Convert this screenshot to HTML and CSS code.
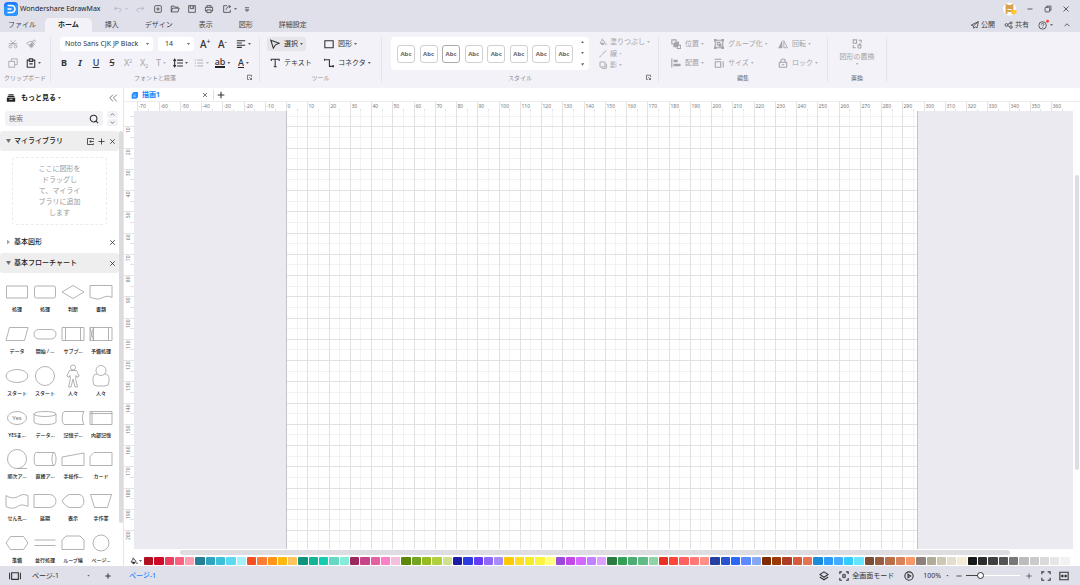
FILE: index.html
```html
<!DOCTYPE html>
<html lang="ja">
<head>
<meta charset="utf-8">
<title>Wondershare EdrawMax</title>
<link rel="stylesheet" href="styles.css">
</head>
<body>
<svg class="defs" aria-hidden="true">
  <symbol id="undo" viewBox="0 0 12 12"><path d="M4 3 1.500 5.200 4 7.500M2 5.200h5c4 0 3 4.300 0 4.300"/></symbol>
  <symbol id="redo" viewBox="0 0 12 12"><path d="M8 3l2.500 2.200L8 7.500M10 5.200H5c-4 0-3 4.300 0 4.300"/></symbol>
  <symbol id="new" viewBox="0 0 12 12"><rect x="2" y="2" width="8" height="8" rx="1"/><path d="M6 4v4M4 6h4"/></symbol>
  <symbol id="open" viewBox="0 0 12 12"><path d="M1.500 9.500v-7H5l1 1.300h3.500V5M1.500 9.500 3 5h8L9.600 9.500z"/></symbol>
  <symbol id="save" viewBox="0 0 12 12"><path d="M2 2h8v8H2zM4 2v3.500h4V2M6.700 3v1.200"/></symbol>
  <symbol id="print" viewBox="0 0 12 12"><path d="M3.500 4V2h5v2M3.500 8.500H1.700V4h8.600v4.500H8.500M3.500 7h5v3.300h-5z"/></symbol>
  <symbol id="export" viewBox="0 0 12 12"><path d="M6 2H2v8h8V7M5 7c0-2.500 1.500-4 5-4M8 1.500 10.300 3 8.500 5"/></symbol>
  <symbol id="more" viewBox="0 0 12 12"><path d="M3.500 4.500h5M4 7h4L6 9z"/></symbol>
  <symbol id="min" viewBox="0 0 12 12"><path d="M3 6h6"/></symbol>
  <symbol id="restore" viewBox="0 0 12 12"><rect x="2.500" y="4" width="5.500" height="5.500" rx="1"/><path d="M4.500 4V2.500h5v5H8"/></symbol>
  <symbol id="x" viewBox="0 0 12 12"><path d="M3 3l6 6M9 3 3 9"/></symbol>
  <symbol id="plus" viewBox="0 0 12 12"><path d="M6 2v8M2 6h8"/></symbol>
  <symbol id="up" viewBox="0 0 12 12"><path d="M3 7.500 6 4.500l3 3"/></symbol>
  <symbol id="down" viewBox="0 0 12 12"><path d="M3 4.500l3 3 3-3"/></symbol>
  <symbol id="send" viewBox="0 0 12 12"><path d="M10 2 1.500 6 4 7.200 4.500 10l1.700-1.800L8.500 9.500zM10 2 4 7.200"/></symbol>
  <symbol id="share" viewBox="0 0 12 12"><circle cx="3" cy="6" r="1.700"/><circle cx="8.500" cy="3.500" r="1.300"/><circle cx="8.500" cy="8.500" r="1.500"/><path d="M4.500 5.200 7.300 4M4.500 6.800l2.600 1.200"/></symbol>
  <symbol id="cut" viewBox="0 0 12 12"><circle cx="2.800" cy="9" r="1.700"/><circle cx="9.200" cy="9" r="1.700"/><path d="M3 1.500l5 6M9 1.500l-5 6M1 5.500h10"/></symbol>
  <symbol id="brush" viewBox="0 0 12 12"><path d="M1 5l5-2.500 4 4L6.500 11zM6.500 3 8.500 5M8.500 5.500 11.500 2.500 10 1 7 3.500"/><path class="f" d="M3.500 7.500l3-3 2.500 2L6.500 10z"/></symbol>
  <symbol id="copy" viewBox="0 0 12 12"><rect x="1" y="4" width="7" height="7"/><path d="M4 4V1h7v7H8"/></symbol>
  <symbol id="paste" viewBox="0 0 12 12"><path class="b" d="M4 2.500H1.500v8.500h9V2.500H8M4 1h4v3H4zM4 7h4"/></symbol>
  <symbol id="align" viewBox="0 0 12 12"><path class="b" d="M1 2h10M1 4.700h6M1 7.400h10M1 10h6"/></symbol>
  <symbol id="spacing" viewBox="0 0 12 12"><path class="b" d="M2 2v8M.5 3.500 2 1.500l1.500 2M.5 8.500 2 10.500l1.500-2M5 2.500h7M5 6h7M5 9.500h7"/></symbol>
  <symbol id="list" viewBox="0 0 12 12"><path d="M1 2.500h1.500M1 6h1.500M1 9.500h1.500M4 2.500h7M4 6h7M4 9.500h7"/></symbol>
  <symbol id="launch" viewBox="0 0 12 12"><path class="b" d="M9.500 5V2h-7v7.500H5M5.500 5.500l4 4M9.500 6.500v3h-3"/></symbol>
  <symbol id="select" viewBox="0 0 12 12"><path class="b" d="M1 1.500l10 3.700L6.500 7 4 11z"/></symbol>
  <symbol id="rect" viewBox="0 0 12 12"><path class="b" d="M1 2h10v8.500H1z"/></symbol>
  <symbol id="text" viewBox="0 0 12 12"><path class="b" d="M1.500 3.700V1.500h9.500v2.200M6.200 1.500v9M4.500 10.500h3.500"/></symbol>
  <symbol id="conn" viewBox="0 0 12 12"><path class="b" d="M1 2h5.500v8H11"/><path class="f" d="M-1 1h2.200v2.200H-1zM10 8.800h2.500V11.200H10z"/></symbol>
  <symbol id="fill" viewBox="0 0 12 12"><path class="b" d="M4.500 1v2.500M1.500 7l4-4.500L9 6.500 5.500 10.500z"/><path class="f" d="M1.500 7h7.500l-3.500 3.500zM10.500 7.500l1.300 2.500H9z"/></symbol>
  <symbol id="line" viewBox="0 0 12 12"><path class="b" d="M1 11 3 8M4 7l7-6"/></symbol>
  <symbol id="shadow" viewBox="0 0 12 12"><path class="b" d="M1.500 1.500h7.500v7.500H1.500z"/><path class="b" d="M4 11h7V4"/></symbol>
  <symbol id="pos" viewBox="0 0 12 12"><path class="b" d="M1 1h5v5H1zM7 3.500h2v3M3.500 7v2.300h3M7.500 7.500H11.500V11.500H7.500z"/><path class="f" d="M3.500 4h5.500v5.500H3.500z"/></symbol>
  <symbol id="group" viewBox="0 0 12 12"><path class="b" d="M1.500 1.500h9v9h-9z"/><path class="f" d="M0 0h3v3H0zM9 0h3v3H9zM0 9h3v3H0zM9 9h3v3H9z"/><path class="b" d="M4 4h3v3H4zM5.500 8.500h3v-3"/></symbol>
  <symbol id="flip" viewBox="0 0 12 12"><path class="f" d="M5.200 1v10H.3z"/><path d="M7 2v8.500h4.300z"/></symbol>
  <symbol id="arrange" viewBox="0 0 12 12"><path class="b" d="M1 .5v11"/><path class="f" d="M3 2h5v3H3zM3 7h8.500v3H3z"/></symbol>
  <symbol id="size" viewBox="0 0 12 12"><path class="b" d="M1.500 4.500h6.500v6.500H1.500zM.5 1.500h8.500M11 4v7.500"/></symbol>
  <symbol id="lock" viewBox="0 0 12 12"><rect class="b" x="1.500" y="5" width="9" height="6" rx=".5"/><path class="b" d="M3.500 5V3.500c0-3 5-3 5 0V5M4.500 8h3"/></symbol>
  <symbol id="swap" viewBox="0 0 12 12"><path class="b" d="M1.500 1h4v4h-4zM8 1.500h3V4.500M1.500 7.500V10.500h3"/><path class="b" d="M8 6.500h3M9.500 5v2"/><circle class="b" cx="9" cy="9" r="2"/></symbol>
  <symbol id="library" viewBox="0 0 12 12"><path class="b" d="M3 2h6M2 4h8"/><path class="f" d="M1 5.500h10v5H1z"/><path class="w" d="M4 7.500h4"/></symbol>
  <symbol id="collapse" viewBox="0 0 12 12"><path d="M6 2 2 6l4 4M10.500 2l-4 4 4 4"/></symbol>
  <symbol id="search" viewBox="0 0 12 12"><circle class="b" cx="5.500" cy="5.500" r="4"/><path class="b" d="M8.500 8.500 11 11"/></symbol>
  <symbol id="import" viewBox="0 0 12 12"><path d="M7 2H2v8h8V8.500M10 3.500V2H7M10.500 6H5M7 4.300 5 6l2 1.700"/></symbol>
  <symbol id="pageicon" viewBox="0 0 16 12"><path class="b" d="M4 2h8v8H4zM1.500 2v8M14.500 2v8"/></symbol>
  <symbol id="layers" viewBox="0 0 12 12"><path class="b" d="M6 1l5 3.200L6 7.500 1 4.200zM1 7.200l5 3.300 5-3.300"/></symbol>
  <symbol id="focus" viewBox="0 0 12 12"><path class="b" d="M1 3.500V1h2.500M8.500 1H11v2.500M11 8.500V11H8.500M3.500 11H1V8.500"/><path d="M4.500 4h3v4h-3zM4.500 6h3"/></symbol>
  <symbol id="play" viewBox="0 0 12 12"><circle class="b" cx="6" cy="6" r="5"/><path class="b" d="M4.800 4v4L8 6z"/></symbol>
  <symbol id="full" viewBox="0 0 12 12"><path class="b" d="M1 4V1h3M8 1h3v3M11 8v3H8M4 11H1V8"/></symbol>
  <symbol id="fit" viewBox="0 0 12 12"><path class="b" d="M1 1.500h10v9H1zM3 6h6M4.500 4.500 3 6l1.500 1.500M7.500 4.500 9 6 7.500 7.500"/></symbol>
</svg>

<header class="top">
  <div class="titlebar">
    <svg class="logo" viewBox="0 0 14 14"><rect width="14" height="14" rx="3.500" fill="#1e7dff"/><path d="M0 5 14 2v8a4 4 0 0 1-4 4H4a4 4 0 0 1-4-4z" fill="#2c95ff"/><path d="M3.500 3.500h4a3.500 3.500 0 0 1 0 7h-4M3.500 7h4" fill="none" stroke="#fff" stroke-width="1.600"/></svg>
    <span class="appname">Wondershare EdrawMax</span>
    <nav class="quick" aria-label="クイックアクセス">
      <button class="off" aria-label="元に戻す"><svg><use href="#undo"/></svg><i></i></button>
      <button class="off" aria-label="やり直し"><svg><use href="#redo"/></svg></button>
      <button aria-label="新規"><svg><use href="#new"/></svg></button>
      <button aria-label="開く"><svg><use href="#open"/></svg></button>
      <button aria-label="保存"><svg><use href="#save"/></svg></button>
      <button aria-label="印刷"><svg><use href="#print"/></svg></button>
      <button aria-label="エクスポート"><svg><use href="#export"/></svg><i></i></button>
      <button aria-label="その他"><svg><use href="#more"/></svg></button>
    </nav>
    <div class="window">
      <button aria-label="アカウント"><svg class="avatar" viewBox="0 0 14 14"><circle cx="6.500" cy="7" r="6.500" fill="#fff"/><path d="M3.500 12V3l2 1h2l2-1v9M4 6h5M4 9h5" fill="none" stroke="#dba04c" stroke-width="1.800"/><path d="M9 8h4l1 2-3 3-3-3z" fill="#ffc62e"/></svg></button>
      <button aria-label="最小化"><svg><use href="#min"/></svg></button>
      <button aria-label="元のサイズ"><svg><use href="#restore"/></svg></button>
      <button aria-label="閉じる"><svg><use href="#x"/></svg></button>
    </div>
  </div>
  <div class="tabs">
    <button>ファイル</button><button class="active">ホーム</button><button>挿入</button><button>デザイン</button><button>表示</button><button>図形</button><button>詳細設定</button>
    <div class="actions">
      <button><svg><use href="#send"/></svg>公開</button>
      <button><svg><use href="#share"/></svg>共有</button>
      <button aria-label="ヘルプ"><svg viewBox="0 0 12 12"><circle cx="5.500" cy="6.500" r="4.500"/><path d="M4 5.500c0-2 3-2 3 0 0 1-1.500 1-1.500 2M5.500 8.500v.8"/><circle cx="11.500" cy="1.500" r="1.700" fill="#ff3b3b" stroke="none"/></svg><i></i></button>
      <button aria-label="リボンを閉じる"><svg><use href="#up"/></svg></button>
    </div>
  </div>
</header>

<section class="ribbon">
  <div class="group clip">
    <div class="row"><button class="off" aria-label="切り取り"><svg><use href="#cut"/></svg></button><button class="off" aria-label="書式コピー"><svg><use href="#brush"/></svg></button></div>
    <div class="row"><button class="off" aria-label="コピー"><svg><use href="#copy"/></svg></button><button aria-label="貼り付け"><svg><use href="#paste"/></svg><i></i></button></div>
    <div class="caption">クリップボード</div>
  </div>
  <div class="sep"></div>
  <div class="group font">
    <div class="row">
      <label class="pick family"><select aria-label="フォント"><option>Noto Sans CJK JP Black</option></select><i></i></label>
      <label class="pick size"><select aria-label="文字サイズ"><option>14</option></select><i></i></label>
      <button class="glyph">A<sup>+</sup></button><button class="glyph">A<sup>-</sup></button>
      <button aria-label="配置"><svg><use href="#align"/></svg><i></i></button>
    </div>
    <div class="row letters">
      <button><b>B</b></button><button><b><em>I</em></b></button><button><u>U</u></button><button><s>S</s></button>
      <button class="off">X<sup>2</sup></button><button class="off">X<sub>2</sub></button><button class="off">T<i></i></button>
      <button aria-label="行間"><svg><use href="#spacing"/></svg><i></i></button>
      <button class="off" aria-label="箇条書き"><svg><use href="#list"/></svg><i></i></button>
      <button><span class="bar">ab</span><i></i></button><button><span class="bar thin">A</span><i></i></button>
    </div>
    <div class="caption">フォントと段落<button class="launch" aria-label="詳細"><svg><use href="#launch"/></svg></button></div>
  </div>
  <div class="sep"></div>
  <div class="group tools">
    <div class="row"><button class="sel"><svg><use href="#select"/></svg>選択<i></i></button><button><svg><use href="#rect"/></svg>図形<i></i></button></div>
    <div class="row"><button><svg><use href="#text"/></svg>テキスト</button><button><svg><use href="#conn"/></svg>コネクタ<i></i></button></div>
    <div class="caption">ツール</div>
  </div>
  <div class="sep"></div>
  <div class="group style">
    <div class="stylebody">
      <div class="gallery">
        <div class="cards"><button>Abc</button><button>Abc</button><button>Abc</button><button>Abc</button><button>Abc</button><button>Abc</button><button>Abc</button><button>Abc</button></div>
        <div class="scroll"><button aria-label="上へ"><i class="flip"></i></button><button aria-label="下へ"><i></i></button><button aria-label="すべて"><i class="all"></i></button></div>
      </div>
      <div class="paint off">
        <button><svg><use href="#fill"/></svg>塗りつぶし<i></i></button>
        <button><svg><use href="#line"/></svg>線<i></i></button>
        <button><svg><use href="#shadow"/></svg>影<i></i></button>
      </div>
    </div>
    <div class="caption">スタイル<button class="launch" aria-label="詳細"><svg><use href="#launch"/></svg></button></div>
  </div>
  <div class="sep"></div>
  <div class="group edit">
    <div class="row off"><button><svg><use href="#pos"/></svg>位置<i></i></button><button><svg><use href="#group"/></svg>グループ化<i></i></button><button><svg><use href="#flip"/></svg>回転<i></i></button></div>
    <div class="row off"><button><svg><use href="#arrange"/></svg>配置<i></i></button><button><svg><use href="#size"/></svg>サイズ<i></i></button><button><svg><use href="#lock"/></svg>ロック<i></i></button></div>
    <div class="caption dark">編集</div>
  </div>
  <div class="sep"></div>
  <div class="group replace">
    <button class="off tall"><svg><use href="#swap"/></svg><span>図形の置換</span><i></i></button>
    <div class="caption dark">置換</div>
  </div>
  <div class="sep"></div>
</section>

<main class="work">
  <aside class="side">
    <div class="sidehead"><svg><use href="#library"/></svg><button>もっと見る<i></i></button><button class="end" aria-label="折りたたむ"><svg><use href="#collapse"/></svg></button></div>
    <div class="find">
      <label class="box"><input type="text" placeholder="検索" aria-label="検索"><svg><use href="#search"/></svg></label>
      <div class="spin"><button aria-label="前へ"><svg><use href="#up"/></svg></button><button aria-label="次へ"><svg><use href="#down"/></svg></button></div>
    </div>
    <div class="panels">
      <div class="list">
        <h2 class="open"><i></i><span>マイライブラリ</span><button aria-label="読み込む"><svg><use href="#import"/></svg></button><button aria-label="追加"><svg><use href="#plus"/></svg></button><button aria-label="閉じる"><svg><use href="#x"/></svg></button></h2>
        <p class="drop">ここに図形をドラッグして、マイライブラリに追加します</p>
        <h2><i class="right"></i><span>基本図形</span><button aria-label="閉じる"><svg><use href="#x"/></svg></button></h2>
        <h2 class="open second"><i></i><span>基本フローチャート</span><button aria-label="閉じる"><svg><use href="#x"/></svg></button></h2>
        <div class="shapes">
          <figure><svg viewBox="0 0 24 20"><path d="M1.500 4h21v12h-21z"/></svg><figcaption>処理</figcaption></figure>
          <figure><svg viewBox="0 0 24 20"><rect x="1.500" y="4" width="21" height="12" rx="2"/></svg><figcaption>処理</figcaption></figure>
          <figure><svg viewBox="0 0 24 20"><path d="M12 3.500 23 10l-11 6.500L1 10z"/></svg><figcaption>判断</figcaption></figure>
          <figure><svg viewBox="0 0 24 20"><path d="M1 3.500h22v12C17 12 13 17 9 17c-3 0-5-1-8-1.500z"/></svg><figcaption>書類</figcaption></figure>
          <figure><svg viewBox="0 0 24 20"><path d="M4.500 3.500H23L19.500 16.500H1z"/></svg><figcaption>データ</figcaption></figure>
          <figure><svg viewBox="0 0 24 20"><rect x="1" y="5.500" width="22" height="9.500" rx="4.700"/></svg><figcaption>開始 / ...</figcaption></figure>
          <figure><svg viewBox="0 0 24 20"><path d="M1 3.500h22v13H1zM4.500 3.500v13M19.500 3.500v13"/></svg><figcaption>サブプ...</figcaption></figure>
          <figure><svg viewBox="0 0 24 20"><path d="M1 3.500h22v13H1zM4.500 3.500v13M19.500 3.500v13M1 3.500l3.500 13M4.500 3.500 1 16.500"/></svg><figcaption>予備処理</figcaption></figure>
          <figure><svg viewBox="0 0 24 20"><ellipse cx="12" cy="10" rx="11" ry="6.500"/></svg><figcaption>スタート</figcaption></figure>
          <figure><svg viewBox="0 0 24 20"><circle cx="12" cy="10" r="9.500"/></svg><figcaption>スタート</figcaption></figure>
          <figure><svg viewBox="0 0 24 20"><circle cx="12" cy="1.500" r="2.500"/><path d="M8.500 4.500h7l2.700 5.500-2.200 1.500-1-2-.5 3 2 8.500h-2.500L12 13l-2 8H7.500l2-8.500L9 9.500l-1 2L5.800 10z"/></svg><figcaption>人々</figcaption></figure>
          <figure><svg viewBox="0 0 24 20"><circle cx="12" cy="4.500" r="5"/><path d="M8.500 8C5.500 8 4 9.500 4 12.500V16q0 4 4 4h8q4 0 4-4v-3.500C20 9.500 18.500 8 15.500 8"/></svg><figcaption>人々</figcaption></figure>
          <figure><svg viewBox="0 0 24 20"><ellipse cx="12" cy="10" rx="9.500" ry="6.500"/><text x="12" y="12">Yes</text></svg><figcaption>YESま...</figcaption></figure>
          <figure><svg viewBox="0 0 24 20"><ellipse cx="12" cy="6" rx="11" ry="2.500"/><path d="M1 6v8c0 3.500 22 3.500 22 0V6"/></svg><figcaption>データ...</figcaption></figure>
          <figure><svg viewBox="0 0 24 20"><path d="M3 3.500h20c-2 3-2 10 0 13H3c-2.500-2-2.500-11 0-13z"/></svg><figcaption>記憶デ...</figcaption></figure>
          <figure><svg viewBox="0 0 24 20"><path d="M1 3.500h22v13H1zM1 5.500h22M3 3.500v13"/></svg><figcaption>内部記憶</figcaption></figure>
          <figure><svg viewBox="0 0 24 20"><circle cx="12" cy="10" r="9.500"/><path d="M12 19.500h10"/></svg><figcaption>順次ア...</figcaption></figure>
          <figure><svg viewBox="0 0 24 20"><ellipse cx="21" cy="10" rx="2" ry="6.500"/><path d="M21 3.500H3c-2.500 1-2.500 12 0 13h18"/></svg><figcaption>直接ア...</figcaption></figure>
          <figure><svg viewBox="0 0 24 20"><path d="M1 8l22-4v12.500H1z"/></svg><figcaption>手操作...</figcaption></figure>
          <figure><svg viewBox="0 0 24 20"><path d="M5 3.500h18v13H1V7.500z"/></svg><figcaption>カード</figcaption></figure>
          <figure><svg viewBox="0 0 24 20"><path d="M1 4.500c6 4 11 2 14 0 3-1.500 5-1 8 0v11c-7-3-9-1-12 1-3 1-7 1-10-1z"/></svg><figcaption>せん孔...</figcaption></figure>
          <figure><svg viewBox="0 0 24 20"><path d="M1 3.500h15.500a6.500 6.500 0 0 1 0 13H1z"/></svg><figcaption>延期</figcaption></figure>
          <figure><svg viewBox="0 0 24 20"><path d="M8 3.500h10c6.500 0 6.500 13 0 13H8Q3 14 1 10 3 6 8 3.500z"/></svg><figcaption>表示</figcaption></figure>
          <figure><svg viewBox="0 0 24 20"><path d="M1.500 3.500h21l-4 13h-13z"/></svg><figcaption>手作業</figcaption></figure>
          <figure><svg viewBox="0 0 24 20"><path d="M5.500 3.500h13L23 10l-4.500 6.500h-13L1 10z"/></svg><figcaption>準備</figcaption></figure>
          <figure><svg viewBox="0 0 24 20"><path d="M1.500 7h21M1.500 12.500h21"/></svg><figcaption>並行処理</figcaption></figure>
          <figure><svg viewBox="0 0 24 20"><path d="M5 3h14l4 4v9.500H1V7z"/></svg><figcaption>ループ端</figcaption></figure>
          <figure><svg viewBox="0 0 24 20"><circle cx="12" cy="10" r="8"/></svg><figcaption>ページ...</figcaption></figure>
        </div>
      </div>
      <div class="track"><div class="thumb"></div></div>
    </div>
  </aside>

  <section class="doc">
    <div class="doctabs">
      <button class="doctab"><svg viewBox="0 0 12 12"><path d="M1 4.500 4 1.500h6.500V9L8 11.500H1z" fill="#2c8cff" stroke="none"/><path d="M3 6h4.500M3 8.500h4.500" stroke="#b8d8ff"/></svg>描画1</button>
      <button aria-label="タブを閉じる"><svg><use href="#x"/></svg></button>
      <button class="add" aria-label="新しいタブ"><svg><use href="#plus"/></svg></button>
    </div>
    <svg class="hruler" id="hruler"></svg>
    <div class="stage">
      <svg class="vruler" id="vruler"></svg>
      <svg class="canvas" id="canvas"></svg>
      <div class="vtrack"><div class="thumb"></div></div>
    </div>
    <div class="htrack"><div class="thumb"></div></div>
    <div class="palette"><button aria-label="塗りつぶし"><svg><use href="#fill"/></svg><i></i></button><div class="swatches" id="swatches"></div></div>
  </section>
</main>

<footer class="status">
  <button class="pg" aria-label="ページ一覧"><svg class="wide"><use href="#pageicon"/></svg></button>
  <label class="pagepick"><select aria-label="ページ"><option>ページ-1</option></select><i></i></label>
  <button class="addpage" aria-label="ページを追加"><svg><use href="#plus"/></svg></button>
  <a class="pagelink" href="#canvas">ページ-1</a>
  <div class="view">
    <button aria-label="レイヤー"><svg><use href="#layers"/></svg></button>
    <button class="mode"><svg><use href="#focus"/></svg>全画面モード</button>
    <button aria-label="再生"><svg><use href="#play"/></svg></button>
    <button class="zoom">100%<i></i></button>
    <button aria-label="縮小"><svg><use href="#min"/></svg></button>
    <input type="range" min="0" max="100" value="24" aria-label="ズーム">
    <button aria-label="拡大"><svg><use href="#plus"/></svg></button>
    <button aria-label="全画面"><svg><use href="#full"/></svg></button>
    <button aria-label="幅に合わせる"><svg><use href="#fit"/></svg></button>
  </div>
</footer>
<script src="script.js"></script>
</body>
</html>
```
FILE: styles.css
```css
* { box-sizing: border-box; }
html, body { height: 100%; }
body {
  margin: 0;
  display: flex;
  flex-direction: column;
  overflow: hidden;
  background: #fff;
  color: #333;
  font: 7px/10px "Noto Sans", "Noto Sans CJK JP", sans-serif;
}
button, input, select { font: inherit; color: inherit; border: 0; padding: 0; margin: 0; background: none; }
button { display: inline-flex; align-items: center; white-space: nowrap; }
svg { flex: none; width: 10px; height: 10px; fill: none; stroke: currentColor; stroke-width: 1; overflow: visible; }
.b { stroke-width: 1.3; }
.f { fill: currentColor; stroke: none; }
.w { stroke: #fff; }
.defs { position: absolute; width: 0; height: 0; }
i { flex: none; width: 3px; height: 2px; margin-left: 2px; background: currentColor; opacity: .75; clip-path: polygon(0 0, 100% 0, 50% 100%); }
.off { color: #a3a3a8; }

.top { background: #e0e0eb; color: #444; }
.titlebar { display: flex; align-items: center; height: 18px; padding: 0 9px 0 4px; }
.logo { width: 14px; height: 14px; stroke: none; }
.appname { width: 93px; margin-left: 2px; color: #222; white-space: nowrap; }
.quick { display: flex; align-items: center; }
.quick button { width: 18px; }
.quick button:first-child { width: 22px; }
.quick .off { color: #b4b4c0; }
.quick button:nth-child(n+3):nth-child(-n+5) { width: 17px; }
.quick button:nth-child(7) { width: 20px; }
.window { display: flex; align-items: center; gap: 8px; margin-left: auto; }
.avatar { width: 14px; height: 14px; stroke: none; }
.tabs { display: flex; height: 14px; }
.tabs > button { padding: 0 13px; }
.tabs > button:first-child { padding: 0 9px 0 8px; }
.tabs .active { background: #f3f2f8; border-radius: 5px 5px 0 0; font-weight: 700; color: #222; }
.actions { display: flex; align-items: center; gap: 9px; margin-left: auto; padding-right: 8px; }
.actions button:nth-child(-n+2) svg { margin-right: 1px; }

.ribbon { display: flex; height: 56px; flex: none; background: #f3f2f8; }
.sep { width: 1px; margin: 5px 0 6px; background: #e4e4ea; }
.group { display: flex; flex-direction: column; padding-top: 3px; }
.row { display: flex; align-items: center; height: 18px; margin-bottom: 1px; }
.caption { position: relative; text-align: center; font-size: 6px; color: #8a8a8f; }
.caption.dark { color: #666; }
.launch { position: absolute; right: 6px; top: 1px; color: #555; }
.launch svg { width: 7px; height: 7px; }
.clip { width: 50px; }
.clip .row { padding-left: 8px; }
.clip .row button { width: 18px; }
.font { width: 208px; }
.font .row { padding-left: 9px; }
.pick { display: flex; align-items: center; height: 14px; padding: 0 4px 0 5px; background: #fff; border-radius: 3px; margin-right: 5px; }
.pick select, .pagepick select { appearance: none; flex: 1; min-width: 0; outline: 0; }
.family { width: 93px; }
.size { width: 36px; padding-left: 7px; margin-right: 6px; }
.glyph { width: 18px; font-size: 10px; font-weight: 500; }
sup, sub { font-size: 5px; line-height: 0; }
sup { align-self: flex-start; margin-top: 3px; }
sub { align-self: flex-end; margin-bottom: 2px; }
.glyph sup { font-size: 7px; }
.letters { font-size: 9px; }
.letters button { width: 16px; justify-content: center; font-weight: 500; }
.letters .off { font-weight: 400; }
.letters button:nth-child(7) { width: 18px; }
.letters button:nth-child(n+8) { width: 21px; }
.font .letters { padding-left: 5px; }
.bar { border-bottom: 2px solid #222; line-height: 8px; }
.thin { border-width: 1px; }
.tools { width: 121px; }
.tools .row { display: grid; grid-template-columns: 54px 1fr; justify-items: start; padding-left: 7px; }
.tools button { height: 14px; padding: 0 3px; border-radius: 3px; }
.tools .sel { background: #e5e5ea; }
.tools button svg { margin-right: 4px; }
.style { width: 276px; }
.stylebody { display: flex; height: 38px; padding: 2px 0 3px 9px; }
.gallery { display: flex; width: 198px; padding: 0 3px 0 6px; background: #fff; border-radius: 4px; }
.cards { display: flex; flex: 1; justify-content: space-between; align-items: center; }
.cards button { width: 18px; height: 18px; justify-content: center; border: 1px solid #d0d0d0; border-radius: 3px; font-size: 6px; font-weight: 700; color: #666; }
.cards button:nth-child(3) { border-color: #aaa; }
.scroll { display: flex; flex-direction: column; justify-content: space-around; width: 13px; padding-left: 8px; }
.scroll i, .pick i { margin: 0; }
.flip { transform: rotate(180deg); }
.scroll .all { height: 3px; clip-path: polygon(0 0, 100% 0, 100% 30%, 0 30%, 50% 100%, 100% 30%); }
.paint { display: flex; flex-direction: column; justify-content: space-between; align-items: flex-start; padding-left: 10px; }
.paint svg { width: 8px; height: 8px; margin-right: 3px; }
.edit { width: 168px; }
.edit .row { display: grid; grid-template-columns: 43px 64px 1fr; justify-items: start; padding-left: 12px; }
.edit svg { margin-right: 4px; }
.replace { width: 58px; }
.tall { flex-direction: column; height: 38px; gap: 1px; padding-top: 4px; }
.tall svg { margin-bottom: 2px; }
.tall i { margin: 0; }

.work { display: flex; flex: 1; min-height: 0; }
.side { display: flex; flex-direction: column; flex: none; width: 124px; border-right: 1px solid #e6e6ea; }
.sidehead { display: flex; align-items: center; height: 20px; padding: 0 5px 0 6px; font-weight: 700; color: #222; }
.sidehead svg { margin-right: 5px; }
.sidehead .end { margin-left: auto; color: #666; }
.sidehead .end svg { margin: 0; }
.find { display: flex; gap: 4px; padding: 3px 5px 5px; height: 23px; }
.box { display: flex; align-items: center; flex: 1; min-width: 0; padding: 0 4px; background: #f1f1f6; border-radius: 3px; }
.box input { flex: 1; min-width: 0; outline: 0; }
.box input::placeholder { color: #777; }
.spin { display: flex; flex-direction: column; flex: none; gap: 1px; width: 11px; }
.spin button { flex: 1; min-height: 0; justify-content: center; background: #f1f1f6; border-radius: 2px; }
.spin svg { width: 7px; height: 7px; }
.panels { display: flex; flex: 1; min-height: 0; }
.list { display: flex; flex-direction: column; width: 119px; min-height: 0; }
h2 { display: flex; align-items: center; flex: none; gap: 2px; height: 20px; margin: 0; padding: 0 2px 0 6px; font-size: 7px; line-height: 10px; font-weight: 500; color: #222; }
h2 span { margin-right: auto; }
h2 i { width: 5px; height: 4px; margin: 0 1px 0 0; color: #444; }
h2 .right { clip-path: polygon(20% 0, 80% 50%, 20% 100%); color: #888; height: 5px; }
h2 svg { width: 9px; height: 9px; }
.open { background: #eee; border-radius: 3px; }
.second { margin-top: 1px; }
.drop { flex: none; height: 68px; margin: 6px 12px 7px; padding: 5px 24px; border: 1px dashed #ececf0; border-radius: 4px; color: #999; line-height: 11px; text-align: center; }
.shapes { display: grid; flex: 1; min-height: 0; grid-template-columns: repeat(4, 1fr); grid-auto-rows: 1fr; padding: 0 4px 0 3px; }
figure { display: flex; flex-direction: column; align-items: center; gap: 3px; margin: 0; padding-top: 9px; min-height: 0; }
figure svg { width: 24px; height: 20px; stroke: #a0a0a0; stroke-width: .8; }
figure text { font-size: 6px; text-anchor: middle; fill: #777; stroke: none; }
figcaption { font-size: 5px; line-height: 8px; font-weight: 500; white-space: nowrap; color: #111; }
.track { width: 4px; }
.track .thumb { height: 90%; background: #dcdce0; border-radius: 2px; }

.doc { display: flex; flex-direction: column; flex: 1; min-width: 0; }
.doctabs { display: flex; align-items: center; height: 13px; flex: none; padding-left: 7px; }
.doctab { width: 70px; color: #1a82ff; font-weight: 700; gap: 3px; }
.doctab svg { width: 8px; height: 8px; }
.doctabs .add { margin-left: 4px; padding-left: 2px; border-left: 1px solid #e0e0e0; }
.doctabs .add svg { stroke-width: 1.3; }
.doctabs button:nth-child(2) svg { width: 8px; height: 8px; }
.hruler { width: 100%; height: 10px; border-top: 1px solid #ececf0; overflow: hidden; }
.hruler, .vruler { stroke: #e2e2e7; }
.hruler text, .vruler text { font-size: 5px; fill: #777; stroke: none; }
.stage { display: flex; flex: 1; min-height: 0; }
.vruler { width: 10px; height: 100%; overflow: hidden; }
.canvas { flex: 1; min-width: 0; height: 100%; background: #ebeaf1; overflow: hidden; }
.vtrack { width: 7px; padding-top: 64px; }
.vtrack .thumb { width: 4px; height: 295px; margin-left: 2px; border-radius: 2px; background: #dedee2; }
.htrack { height: 7px; flex: none; padding: 1px 70px 1px 56px; }
.htrack .thumb { height: 5px; border-radius: 3px; background: #dedee2; }
.palette { display: flex; align-items: center; height: 10px; flex: none; padding-left: 6px; }
.palette > button { width: 14px; }
.palette > button svg { width: 8px; height: 8px; }
.palette i { margin-left: 1px; }
.swatches { display: flex; flex: 1; gap: 1px; }
.swatches button { flex: 1; height: 8px; border-radius: 1px; }

.status { display: flex; align-items: center; height: 19px; flex: none; padding-right: 11px; background: #e0e0eb; }
.wide { width: 14px; height: 10px; }
.pg { margin: 0 10px 0 8px; }
.pagepick { display: flex; align-items: center; width: 58px; }
.addpage { margin: 0 17px 0 14px; }
.addpage svg { width: 8px; height: 8px; stroke-width: 1.5; }
.pagelink { color: #1a82ff; text-decoration: none; font-weight: 500; }
.view { display: flex; align-items: center; gap: 5px; margin-left: auto; }
.view .mode { gap: 3px; margin: 0 5px; }
.zoom { margin-left: 4px; }
.zoom i { margin-left: 5px; }
.view input { appearance: none; width: 54px; height: 8px; margin: 0 -3px; outline: 0; background: linear-gradient(90deg, #444 24%, #fff 24%) center / 100% 1px no-repeat; }
.view input::-webkit-slider-thumb { appearance: none; width: 7px; height: 7px; border: 1px solid #333; border-radius: 50%; background: #fff; }
.view button:nth-last-child(-n+3) { margin-left: 3px; }
.view button:nth-last-child(3) svg { width: 8px; height: 8px; }
```
FILE: script.js
```javascript
const NS = 'http://www.w3.org/2000/svg';
const STEP = 21.25;      // pixels per 10 mm
const ORIGIN_X = 152;    // page's left edge inside the canvas
const ORIGIN_Y = -6;     // page's top edge, scrolled out of view
const PAGE_W = 631;
const LABEL_W = 14;      // room a label needs before the ruler's end

function add(parent, name, attrs, text) {
  const el = document.createElementNS(NS, name);
  for (const key in attrs) el.setAttribute(key, attrs[key]);
  if (text !== undefined) el.textContent = text;
  parent.appendChild(el);
}
const snap = v => Math.round(v) + 0.5;

function draw() {
  const h = document.getElementById('hruler');
  const v = document.getElementById('vruler');
  const c = document.getElementById('canvas');
  [h, v, c].forEach(el => el.replaceChildren());
  const { width, height } = c.getBoundingClientRect();

  for (let n = -7; ORIGIN_X + n * STEP + LABEL_W < width; n++) {
    const x = snap(10 + ORIGIN_X + n * STEP);
    const half = snap(10 + ORIGIN_X + (n + 0.5) * STEP);
    add(h, 'path', { d: `M${x} 0V10M${half} 7V10` });
    add(h, 'text', { x: x + 1, y: 6 }, n * 10);
  }
  for (let n = 1; ORIGIN_Y + n * STEP + LABEL_W < height; n++) {
    const y = snap(ORIGIN_Y + n * STEP);
    const half = snap(ORIGIN_Y + (n - 0.5) * STEP);
    add(v, 'path', { d: `M0 ${y}H10M6 ${half}H10` });
    add(v, 'text', { transform: `translate(6 ${y + 1}) rotate(-90)`, 'text-anchor': 'end' }, n * 10);
  }

  add(c, 'rect', { x: ORIGIN_X, y: 0, width: PAGE_W, height, fill: '#fff', stroke: 'none' });
  let light = '', bold = '';
  for (let n = 1; n * STEP / 2 < PAGE_W; n++) {
    const d = `M${snap(ORIGIN_X + n * STEP / 2)} 0V${height}`;
    if (n % 2) light += d; else bold += d;
  }
  for (let n = 1; ORIGIN_Y + n * STEP / 2 < height; n++) {
    const d = `M${ORIGIN_X} ${snap(ORIGIN_Y + n * STEP / 2)}h${PAGE_W}`;
    if (n % 2) light += d; else bold += d;
  }
  add(c, 'path', { d: light, stroke: '#f2f2f4' });
  add(c, 'path', { d: bold, stroke: '#e1e1e4' });
  add(c, 'path', { d: `M${ORIGIN_X + 0.5} 0V${height}M${ORIGIN_X + PAGE_W + 0.5} 0V${height}`, stroke: '#c4c4c8' });
}

const COLORS = ('b01020 d0082c ea4060 fa6080 fc9cb0 267f94 30a5c0 3cc0dc 5cd8f0 a4f0fc f45022 ff7c34 ff9416 ffb810 ffc45c ' +
  '0c947c 12b498 14ccb0 64d8c4 84ecd8 9c2860 c84488 e460a4 fc80c8 f0c0dc 5c8808 74a420 98bc20 b0d040 d0e090 ' +
  '1c1ca8 2c3ce0 643cf4 9068f8 a88cfc ffc800 ffdc28 f4ec24 fcf440 ffff80 9c48d8 c448e8 d468fc c080ff dca0ff ' +
  '2a7c40 34a054 4cac74 60bc84 8cd4a8 e83024 ff4438 fc6060 ff7878 ff9088 2440a0 2854d0 2c68f4 6088ff 84a8f4 ' +
  '7c2c00 9c3800 ac3c24 d45c3c e47454 1a8cdc 2c9cf8 44acfc 34ccfc 64e4ff 7c4c34 985c40 b87048 d88458 f89868 ' +
  '8c8078 b0ac98 ccc8b4 e4dccc f4ecd8 181818 2c2c2c 404040 545454 787878 bcbcbc cacaca dadada e6e6e6 f2f2f2 ffffff').split(' ');
const box = document.getElementById('swatches');
COLORS.forEach(color => {
  const b = document.createElement('button');
  b.style.background = '#' + color;
  b.setAttribute('aria-label', '#' + color);
  box.appendChild(b);
});

draw();
addEventListener('resize', draw);
```
